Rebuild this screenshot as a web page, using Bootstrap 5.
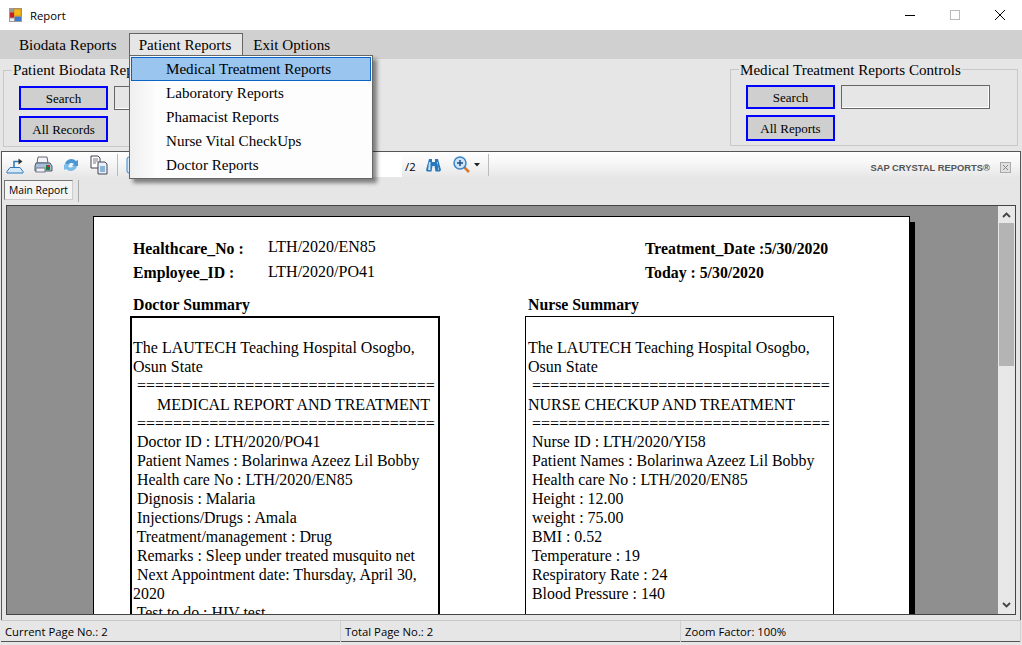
<!DOCTYPE html>
<html lang="en">
<head>
  <meta charset="UTF-8">
  <meta name="viewport" content="width=device-width, initial-scale=1.0">
  <title>Report</title>
  <link href="https://cdn.jsdelivr.net/npm/bootstrap@5.3.0/dist/css/bootstrap.min.css" rel="stylesheet">
  <style>
    html, body { height: 645px; overflow: hidden; }
    body { background: #e6e6e6; font-family: "Liberation Serif", serif; color: #000; }
    .win-title { height: 30px; background: #fff; font: 11.3px "Open Sans", sans-serif; padding-left: 9px; }
    .win-btns { gap: 35px; padding-right: 17px; }
    .menu-strip { height: 29px; background: #d0d0d0; padding: 3px 0 0 8px; font-size: 15.1px; position: relative; }
    .menu-top { height: 22px; padding: 0 10px; line-height: 23px; border: 1px solid transparent; border-bottom: 0; }
    .menu-top.opened { background: #e6e6e6; border-color: #666; margin-left: 1px; padding: 0 11px 0 9px; }
    .menu-top.opened + .menu-top { margin-left: -1px; }
    .report-menu.dropdown-menu { left: 129px; top: 25px; width: 244px; height: 124px; padding: 1px; margin: 0; border: 1px solid #666; border-radius: 0; font-size: 15.1px;
      box-shadow: 4px 4px 4px rgba(0,0,0,.45); background: linear-gradient(90deg, #efefef, #fbfbfb 24px, #fdfdfd 25px); }
    .report-menu .dropdown-item { height: 24px; padding: 0 0 0 34px; line-height: 23px; color: #000; border: 1px solid transparent; }
    .report-menu .dropdown-item.active { background: #99c5ee; border-color: #0a64c8; color: #000; }
    .control-band { height: 92px; padding: 0 4px 0 3px; }
    .ctl-group { border: 1px solid #c8c8c8; height: 77px; padding: 15px 15px 0; position: relative; }
    .ctl-group.left-group { width: 360px; margin-top: 11px; }
    .ctl-group.right-group { width: 288px; margin-top: 10px; }
    .ctl-legend { position: absolute; top: -10px; left: 8px; background: #e6e6e6; padding: 0 1px; font-size: 15.1px; line-height: 18px; white-space: nowrap; }
    .right-group .ctl-legend { top: -9px; }
    .ctl-btn { width: 89px; height: 24px; background: #cfcfcf; border: 2px solid #0000ff; border-radius: 0; padding: 1px 0 0; font-size: 13px; line-height: 20px; color: #000; }
    .ctl-btn.tall { height: 26px; margin-top: 6px; }
    .ctl-input.form-control { width: 149px; height: 24px; min-height: 0; background: #e6e6e6; border: 1px solid #666; border-radius: 0; margin-left: 6px; padding: 0; box-shadow: inset -1px -1px 0 #fff; }
    .viewer { height: 469px; margin: 0 1px; border: 1px solid #555; border-bottom: 0; display: flex; flex-direction: column; }
    .tool-strip { height: 26px; flex: none; background: linear-gradient(#fff, #f7f7f7 40%, #e6e6e6); padding-left: 3px; gap: 8px; position: relative; }
    .tool-sep { width: 1px; height: 22px; background: #bbb; }
    .page-box { width: 130px; height: 22px; margin: 2px -5px 0 122px; background: #fff; }
    .page-total { font: 11.3px "Open Sans", sans-serif; width: 10px; margin-top: 2px; }
    .tool-right { position: absolute; right: 9px; top: 2px; height: 26px; gap: 10px; }
    .sap-mark { font: bold 9.4px "Liberation Sans", sans-serif; color: #555; }
    .tab-strip { height: 27px; flex: none; padding: 2px 0 0 2px; }
    .tab-main { width: 69px; height: 20px; border: 1px solid #777; border-right-color: #ccc; border-bottom-color: #ccc; background: #f4f4f4; font: 10.3px "Open Sans", sans-serif; text-align: center; line-height: 18px; }
    .tab-bar { width: 1px; height: 22px; background: #aaa; margin-left: 5px; }
    .report-pane { margin: 0 4px 0 4px; height: 410px; border: 1px solid #444; background: #8f8f8f; position: relative; overflow: hidden; flex: none; }
    .sheet { width: 817px; margin: 10px 0 0 86px; height: 500px; background: #fff; border: 1px solid #000; box-shadow: 5px 6px 0 #000; padding-top: 22px; }
    .head-line { display: flex; height: 24px; font-size: 15.8px; line-height: 20px; }
    .head-key { width: 135px; margin-left: 39px; font-weight: bold; }
    .head-val { width: 377px; margin-top: -2px; font-size: 16px; }
    .head-line + .head-line .head-val { margin-top: -1px; }
    .head-right { font-weight: bold; }
    .sum-cols { display: flex; margin-top: 8px; }
    .sum-col { width: 395px; padding-left: 36px; }
    .sum-title { font-weight: bold; font-size: 15.8px; line-height: 19px; margin-left: 3px; height: 21px; }
    .sum-box { width: 310px; height: 400px; border: 2px solid #000; padding: 20px 0 0 1px; white-space: pre; font-size: 16px; line-height: 19px; }
    .sum-box.thin { width: 309px; border-width: 1px; padding: 21px 0 0 2px; }
    .sum-rest { font-size: 15.9px; margin-top: -1px; }
    .scroll-rail { position: absolute; right: 0; top: 0; bottom: 0; width: 17px; background: #e8e8e8; }
    .scroll-thumb { position: absolute; left: 1px; right: 1px; top: 17px; height: 143px; background: #b4b4b4; }
    .scroll-up, .scroll-down { position: absolute; left: 4px; display: block; }
    .scroll-up { top: 6px; }
    .scroll-down { bottom: 6px; }
    .status-line { height: 22px; border-top: 1px solid #c8c8c8; border-bottom: 1px solid #555; margin: 0 1px; font: 11.3px "Open Sans", sans-serif; }
    .status-cell { padding-left: 4px; line-height: 21px; border-right: 1px solid #d0d0d0; }
  </style>
</head>
<body>
  <div class="win-title d-flex align-items-center justify-content-between">
    <div class="d-flex align-items-center gap-2">
      <svg width="13" height="14" viewBox="0 0 13 14"><rect width="13" height="14" fill="#9a9a9a"/><rect x="5" y="1" width="7" height="7" fill="#f4b81c" stroke="#b8801a" stroke-width=".6"/><rect x="1" y="4.5" width="4" height="5" fill="#c9201a"/><rect x="6" y="9" width="6" height="4" fill="#3f78d0"/><rect x="1" y="10.500" width="4" height="2.500" fill="#eee"/></svg>
      <span>Report</span>
    </div>
    <div class="win-btns d-flex align-items-center">
      <svg width="10" height="10" viewBox="0 0 10 10"><path d="M0 5.500h10" stroke="#000"/></svg>
      <svg width="10" height="10" viewBox="0 0 10 10"><rect x=".5" y=".5" width="9" height="9" fill="none" stroke="#bbb"/></svg>
      <svg width="10" height="10" viewBox="0 0 10 10"><path d="M0 0l10 10M10 0L0 10" stroke="#000" fill="none"/></svg>
    </div>
  </div>

  <div class="menu-strip d-flex">
    <div class="menu-top">Biodata Reports</div>
    <div class="menu-top opened">Patient Reports</div>
    <div class="menu-top">Exit Options</div>
    <div class="dropdown-menu show report-menu">
      <a class="dropdown-item active" href="#">Medical Treatment Reports</a>
      <a class="dropdown-item" href="#">Laboratory Reports</a>
      <a class="dropdown-item" href="#">Phamacist Reports</a>
      <a class="dropdown-item" href="#">Nurse Vital CheckUps</a>
      <a class="dropdown-item" href="#">Doctor Reports</a>
    </div>
  </div>

  <div class="control-band d-flex justify-content-between align-items-start">
    <div class="ctl-group left-group">
      <div class="ctl-legend">Patient Biodata Reports Controls</div>
      <div class="d-flex"><button class="btn ctl-btn">Search</button><input class="form-control ctl-input"></div>
      <button class="btn ctl-btn tall">All Records</button>
    </div>
    <div class="ctl-group right-group">
      <div class="ctl-legend">Medical Treatment Reports Controls</div>
      <div class="d-flex"><button class="btn ctl-btn">Search</button><input class="form-control ctl-input"></div>
      <button class="btn ctl-btn tall">All Reports</button>
    </div>
  </div>

  <div class="viewer">
    <div class="tool-strip d-flex align-items-center">
      <!-- export -->
      <svg width="20" height="20" viewBox="0 0 20 20"><path d="M2 16.500 5 12.500h10l3 4v1.500H2z" fill="#d5e8f7" stroke="#2c78b8"/><path d="M9 12V6.500h5" fill="none" stroke="#2c78b8" stroke-width="1.500"/><path d="M13.500 3.500l4 3-4 3z" fill="#333"/></svg>
      <!-- print -->
      <svg width="20" height="20" viewBox="0 0 20 20"><path d="M5 2h9l1 6H4z" fill="#f2f4f7" stroke="#667"/><path d="M3 8h14l2 3v5H2v-5z" fill="#a9bfd8" stroke="#4a5a70"/><rect x="13" y="10" width="4" height="5" fill="#1f7d3a"/><rect x="15" y="10" width="2" height="2" fill="#c9302a"/><rect x="3" y="13" width="9" height="4" fill="#eef2f7" stroke="#778"/></svg>
      <!-- refresh -->
      <svg width="20" height="20" viewBox="0 0 20 20"><path d="M4 9a6.500 6.500 0 0 1 11-3l2-1v6h-6l2-2a3.800 3.800 0 0 0-6 1z" fill="#4a97d4"/><path d="M16 11a6.500 6.500 0 0 1-11 3l-2 1V9.500h6l-2 2a3.800 3.800 0 0 0 6-1z" fill="#79bce8"/></svg>
      <!-- copy -->
      <svg width="20" height="20" viewBox="0 0 20 20"><path d="M2 1h7l2 2v10H2z" fill="#fff" stroke="#445"/><path d="M4 4h5M4 6h5M4 8h3" stroke="#778"/><path d="M9 7h7l2 2v10H9z" fill="#e8f0f9" stroke="#445"/><path d="M11 12h5M11 14h5M11 16h5" stroke="#2c78b8"/></svg>
      <div class="tool-sep"></div>
      <svg width="16" height="20" viewBox="0 0 16 20"><rect x="1" y="2" width="14" height="16" rx="2" fill="#dcecf9" stroke="#3a86c8"/></svg>
      <div class="page-box"></div>
      <div class="page-total">/2</div>
      <!-- find -->
      <svg style="margin-left:3px" width="15" height="14" viewBox="0 0 15 14"><path d="M3 1h3v3h3V1h3l3 11-1 1.500H9.500L8.500 8h-2l-1 5.500H1L0 12z" fill="#2a78bc"/><path d="M3 4h1.500v8H2zM11 4h1v8h1z" fill="#bcdcf4"/></svg>
      <!-- zoom -->
      <svg style="margin-left:4px" width="18" height="18" viewBox="0 0 18 18"><path d="M10 10l6 6" stroke="#d8782a" stroke-width="2.500"/><circle cx="7" cy="7" r="6" fill="#cfe4f7" stroke="#3a86c8" stroke-width="1.500"/><path d="M4 7h6M7 4v6" stroke="#1f4f8a" stroke-width="1.500"/></svg>
      <svg style="margin-left:-5px" width="6" height="4" viewBox="0 0 6 4"><path d="M0 0h6L3 3.500z" fill="#222"/></svg>
      <div class="tool-sep"></div>
      <div class="tool-right d-flex align-items-center">
        <span class="sap-mark">SAP CRYSTAL REPORTS®</span>
        <svg width="11" height="11" viewBox="0 0 11 11"><rect x=".5" y=".5" width="10" height="10" fill="#e0e0e0" stroke="#aaa"/><path d="M3 3l5 5M8 3l-5 5" stroke="#888"/></svg>
      </div>
    </div>
    <div class="tab-strip d-flex">
      <div class="tab-main">Main Report</div>
      <div class="tab-bar"></div>
    </div>
    <div class="report-pane">
      <div class="sheet">
        <div class="head-line"><div class="head-key">Healthcare_No :</div><div class="head-val">LTH/2020/EN85</div><div class="head-right">Treatment_Date :5/30/2020</div></div>
        <div class="head-line"><div class="head-key">Employee_ID :</div><div class="head-val">LTH/2020/PO41</div><div class="head-right">Today : 5/30/2020</div></div>
        <div class="sum-cols">
          <div class="sum-col">
            <div class="sum-title">Doctor Summary</div>
<div class="sum-box">The LAUTECH Teaching Hospital Osogbo,
Osun State
 =================================
      MEDICAL REPORT AND TREATMENT
 =================================
<div class="sum-rest"> Doctor ID : LTH/2020/PO41
 Patient Names : Bolarinwa Azeez Lil Bobby
 Health care No : LTH/2020/EN85
 Dignosis : Malaria
 Injections/Drugs : Amala
 Treatment/management : Drug
 Remarks : Sleep under treated musquito net
 Next Appointment date: Thursday, April 30,
2020
 Test to do : HIV test</div></div>
          </div>
          <div class="sum-col">
            <div class="sum-title">Nurse Summary</div>
<div class="sum-box thin">The LAUTECH Teaching Hospital Osogbo,
Osun State
 =================================
NURSE CHECKUP AND TREATMENT
 =================================
<div class="sum-rest"> Nurse ID : LTH/2020/YI58
 Patient Names : Bolarinwa Azeez Lil Bobby
 Health care No : LTH/2020/EN85
 Height : 12.00
 weight : 75.00
 BMI : 0.52
 Temperature : 19
 Respiratory Rate : 24
 Blood Pressure : 140</div></div>
          </div>
        </div>
      </div>
      <div class="scroll-rail">
        <svg class="scroll-up" width="9" height="6" viewBox="0 0 9 6"><path d="M1 5l3.500-3.500L8 5" fill="none" stroke="#444" stroke-width="1.800"/></svg>
        <div class="scroll-thumb"></div>
        <svg class="scroll-down" width="9" height="6" viewBox="0 0 9 6"><path d="M1 1l3.500 3.500L8 1" fill="none" stroke="#444" stroke-width="1.800"/></svg>
      </div>
    </div>
  </div>

  <div class="status-line row g-0">
    <div class="col-4 status-cell">Current Page No.: 2</div>
    <div class="col-4 status-cell">Total Page No.: 2</div>
    <div class="col-4 status-cell">Zoom Factor: 100%</div>
  </div>
</body>
</html>
